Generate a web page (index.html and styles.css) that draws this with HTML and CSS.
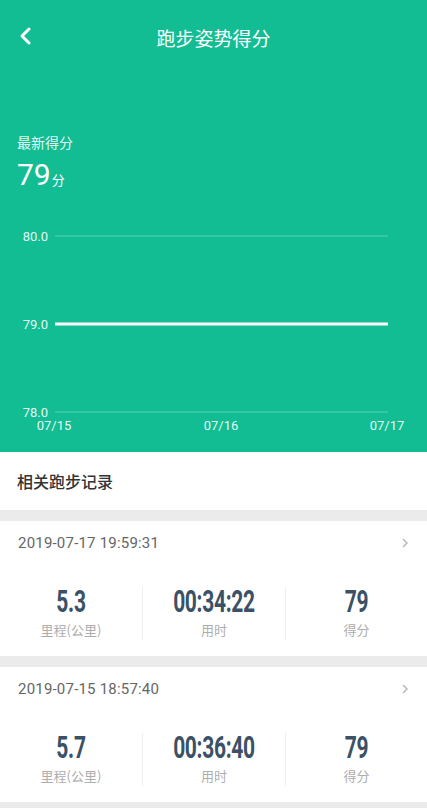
FILE: index.html
```html
<!DOCTYPE html>
<html lang="zh-CN">
<head>
    <meta charset="UTF-8">
    <meta name="viewport" content="width=device-width, initial-scale=1.0">
    <title>跑步姿势得分</title>
    <link rel="stylesheet" href="styles.css">
</head>
<body>
    <div class="hero">
        <div class="topbar">
            <svg class="back" width="14" height="18" viewBox="0 0 14 18">
                <path d="M10 2 L3 9 L10 16" fill="none" stroke="#fff" stroke-width="3" stroke-linecap="round" stroke-linejoin="round"/>
            </svg>
            <h1>跑步姿势得分</h1>
        </div>

        <div class="latest">
            <p class="latest-label">最新得分</p>
            <p class="latest-score">79<span>分</span></p>
        </div>

        <svg class="chart" width="427" height="259" viewBox="0 0 427 259">
            <line x1="55" y1="43" x2="388" y2="43" class="grid"/>
            <line x1="55" y1="219" x2="388" y2="219" class="grid"/>
            <line x1="55" y1="131" x2="388" y2="131" class="trend"/>
            <text x="48" y="48" text-anchor="end" class="axis">80.0</text>
            <text x="48" y="136" text-anchor="end" class="axis">79.0</text>
            <text x="48" y="224" text-anchor="end" class="axis">78.0</text>
            <text x="54" y="237" text-anchor="middle" class="axis">07/15</text>
            <text x="221" y="237" text-anchor="middle" class="axis">07/16</text>
            <text x="387" y="237" text-anchor="middle" class="axis">07/17</text>
        </svg>
    </div>

    <div class="section-title">相关跑步记录</div>

    <div class="record">
        <div class="record-head">
            <span class="record-date">2019-07-17 19:59:31</span>
            <svg class="arrow" width="8" height="12" viewBox="0 0 8 12">
                <path d="M2 2 L6 6 L2 10" fill="none" stroke="#b5b5b5" stroke-width="1.4"/>
            </svg>
        </div>
        <div class="stats">
            <div class="stat">
                <div class="stat-value">5.3</div>
                <div class="stat-label">里程(公里)</div>
            </div>
            <div class="stat">
                <div class="stat-value">00:34:22</div>
                <div class="stat-label">用时</div>
            </div>
            <div class="stat">
                <div class="stat-value">79</div>
                <div class="stat-label">得分</div>
            </div>
        </div>
    </div>

    <div class="record">
        <div class="record-head">
            <span class="record-date">2019-07-15 18:57:40</span>
            <svg class="arrow" width="8" height="12" viewBox="0 0 8 12">
                <path d="M2 2 L6 6 L2 10" fill="none" stroke="#b5b5b5" stroke-width="1.4"/>
            </svg>
        </div>
        <div class="stats">
            <div class="stat">
                <div class="stat-value">5.7</div>
                <div class="stat-label">里程(公里)</div>
            </div>
            <div class="stat">
                <div class="stat-value">00:36:40</div>
                <div class="stat-label">用时</div>
            </div>
            <div class="stat">
                <div class="stat-value">79</div>
                <div class="stat-label">得分</div>
            </div>
        </div>
    </div>
</body>
</html>
```

FILE: styles.css
```css
body {
    margin: 0;
    background-color: #ebebeb;
    font-family: Roboto, "Noto Sans CJK SC", sans-serif;
    overflow: hidden;
}
p {
    margin: 0;
}
.hero {
    background-color: #13bd93;
    color: #fff;
}
.topbar {
    height: 76px;
    padding-bottom: 4px;
    display: flex;
    align-items: center;
    justify-content: center;
    position: relative;
}
.topbar .back {
    position: absolute;
    left: 19px;
    top: 27px;
}
.topbar h1 {
    margin: 0;
    font-size: 19px;
    line-height: 26px;
    font-weight: 400;
    font-family: "Noto Sans CJK SC", sans-serif;
}
.latest {
    padding: 52px 17px 0;
}
.latest-label {
    font-size: 14px;
    line-height: 20px;
    font-family: "Noto Sans CJK SC", sans-serif;
    color: rgba(255,255,255,0.9);
}
.latest-score {
    margin-top: 5px;
    font-size: 30px;
    line-height: 36px;
}
.latest-score span {
    font-size: 13px;
    line-height: 1;
    margin-left: 1px;
    font-family: "Noto Sans CJK SC", sans-serif;
}
.chart {
    display: block;
}
.chart .grid {
    stroke: rgba(255,255,255,0.3);
    stroke-width: 1;
}
.chart .trend {
    stroke: #fff;
    stroke-width: 3;
}
.chart .axis {
    fill: rgba(255,255,255,0.9);
    font-size: 13px;
    font-family: Roboto, sans-serif;
}
.section-title {
    background-color: #fff;
    height: 58px;
    line-height: 58px;
    padding-left: 17px;
    font-size: 16px;
    font-weight: 500;
    color: #333;
    font-family: "Noto Sans CJK SC", sans-serif;
    margin-bottom: 11px;
}
.record {
    background-color: #fff;
    padding-bottom: 16px;
    margin-bottom: 11px;
}
.record-head {
    height: 44px;
    display: flex;
    align-items: center;
    justify-content: space-between;
    padding: 0 18px;
}
.record-date {
    font-size: 15px;
    letter-spacing: 0.2px;
    color: #666;
}
.stats {
    display: grid;
    grid-template-columns: 142px 143px 142px;
    margin-top: 22px;
}
.stat {
    text-align: center;
}
.stat + .stat {
    border-left: 1px solid #eeeeee;
}
.stat-value {
    font-size: 21px;
    line-height: 28px;
    font-weight: 700;
    color: #3a5166;
    letter-spacing: -0.3px;
    transform: scaleY(1.5);
}
.stat-label {
    margin-top: 5px;
    font-size: 13px;
    line-height: 20px;
    color: #adadad;
    font-family: "Noto Sans CJK SC", sans-serif;
}
```
